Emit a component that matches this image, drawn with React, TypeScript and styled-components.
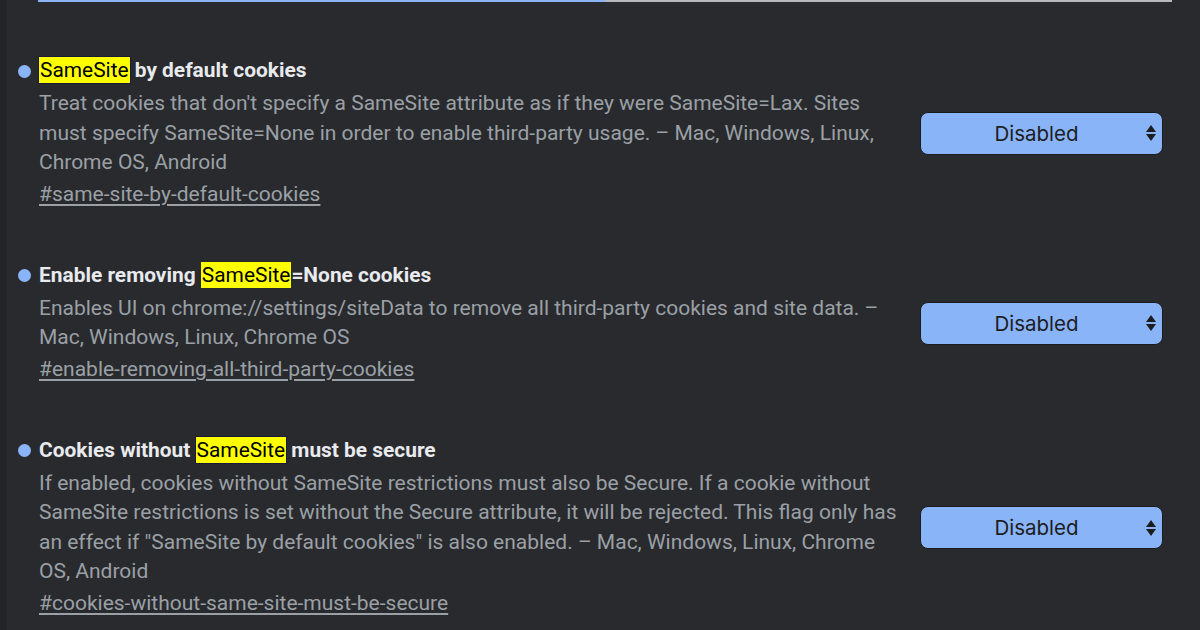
import React from "react";
import styled, { createGlobalStyle } from "styled-components";

const Global = createGlobalStyle`
  html, body { margin: 0; padding: 0; background: #292a2d; }
  body { font-family: Roboto, "Noto Sans", sans-serif; -webkit-font-smoothing: antialiased; }
`;

const Page = styled.div`
  display: flex;
  width: 1200px;
  height: 630px;
  overflow: hidden;
  background: #292a2d;
`;

const Strip = styled.div`
  width: 7px;
  flex: none;
  background: #232427;
`;

const Main = styled.div`
  flex: 1;
  display: flex;
  flex-direction: column;
`;

const SearchLine = styled.div`
  height: 2px;
  margin: 0 28px 0 31px;
  background: linear-gradient(to right, #8ab4f8 0, #8ab4f8 567px, #b5b8bd 567px);
`;

const List = styled.div`
  display: flex;
  flex-direction: column;
  gap: 52px;
  padding: 55px 37px 0 11px;
`;

const Experiment = styled.div`
  display: flex;
  align-items: center;
  gap: 19px;
`;

const Info = styled.div`
  flex: 1;
  display: grid;
  grid-template-columns: 12px 1fr;
  column-gap: 9px;
  align-items: center;
`;

const Dot = styled.span`
  width: 13px;
  height: 13px;
  border-radius: 50%;
  background: #8ab4f8;
  margin-top: 1px;
`;

const Title = styled.h2`
  margin: 0;
  font-size: 20.9px;
  line-height: 27px;
  font-weight: 700;
  color: #e8eaed;
`;

const Mark = styled.mark<{ $outlined?: boolean }>`
  background: #ffff00;
  color: #000;
  font-weight: 400;
  padding: 1px 1px;
  box-shadow: ${(p) => (p.$outlined ? "0 0 0 1px #1a1a3a" : "none")};
`;

const Desc = styled.p`
  grid-column: 2;
  margin: 5px 0 0;
  font-size: 21px;
  line-height: 29.5px;
  color: #9aa0a6;
`;

const Link = styled.a`
  grid-column: 2;
  margin-top: 2.5px;
  font-size: 21px;
  line-height: 29.5px;
  color: #9aa0a6;
  text-decoration: underline;
  text-underline-offset: 3px;
`;

const Select = styled.div`
  position: relative;
  flex: none;
  width: 243px;
  height: 43px;
  box-sizing: border-box;
  border: 1px solid #1a1b1e;
  border-radius: 8px;
  background: #8ab4f8;
  display: flex;
  align-items: center;
  justify-content: center;
  font-family: Inter, "Liberation Sans", sans-serif;
  font-size: 20.5px;
  color: #1c1d1f;
  padding-right: 10px;
`;

const Arrows = styled.svg`
  position: absolute;
  right: 5px;
  top: 50%;
  transform: translateY(-50%);
`;

type Exp = {
  before: string;
  after: string;
  outlined: boolean;
  desc: string;
  link: string;
};

const data: Exp[] = [
  {
    before: "",
    after: " by default cookies",
    outlined: true,
    desc:
      "Treat cookies that don't specify a SameSite attribute as if they were SameSite=Lax. Sites must specify SameSite=None in order to enable third-party usage. – Mac, Windows, Linux, Chrome OS, Android",
    link: "#same-site-by-default-cookies",
  },
  {
    before: "Enable removing ",
    after: "=None cookies",
    outlined: false,
    desc:
      "Enables UI on chrome://settings/siteData to remove all third-party cookies and site data. – Mac, Windows, Linux, Chrome OS",
    link: "#enable-removing-all-third-party-cookies",
  },
  {
    before: "Cookies without ",
    after: " must be secure",
    outlined: true,
    desc:
      'If enabled, cookies without SameSite restrictions must also be Secure. If a cookie without SameSite restrictions is set without the Secure attribute, it will be rejected. This flag only has an effect if "SameSite by default cookies" is also enabled. – Mac, Windows, Linux, Chrome OS, Android',
    link: "#cookies-without-same-site-must-be-secure",
  },
];

export default function App() {
  return (
    <>
      <Global />
      <Page>
        <Strip />
        <Main>
          <SearchLine />
          <List>
            {data.map((e) => (
              <Experiment key={e.link}>
                <Info>
                  <Dot />
                  <Title>
                    {e.before}
                    <Mark $outlined={e.outlined}>SameSite</Mark>
                    {e.after}
                  </Title>
                  <Desc>{e.desc}</Desc>
                  <Link href={e.link}>{e.link}</Link>
                </Info>
                <Select>
                  Disabled
                  <Arrows width="12" height="20" viewBox="0 0 12 20">
                    <path d="M6 2 L11 9 L1 9 Z" fill="#1c1d1f" />
                    <path d="M1 11 L11 11 L6 18 Z" fill="#1c1d1f" />
                  </Arrows>
                </Select>
              </Experiment>
            ))}
          </List>
        </Main>
      </Page>
    </>
  );
}
